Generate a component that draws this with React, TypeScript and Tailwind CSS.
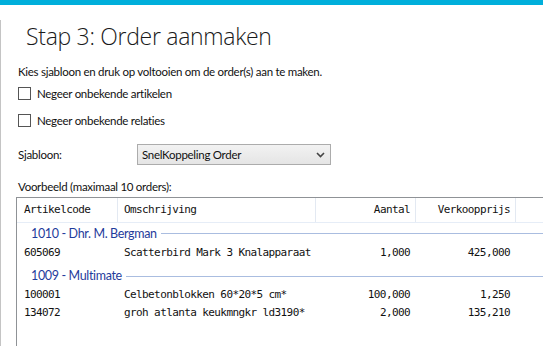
import React from 'react';

type Row = { code: string; desc: string; qty: string; price: string };
type Group = { title: string; rows: Row[] };

const groups: Group[] = [
  {
    title: '1010 - Dhr. M. Bergman',
    rows: [{ code: '605069', desc: 'Scatterbird Mark 3 Knalapparaat', qty: '1,000', price: '425,000' }],
  },
  {
    title: '1009 - Multimate',
    rows: [
      { code: '100001', desc: 'Celbetonblokken 60*20*5 cm*', qty: '100,000', price: '1,250' },
      { code: '134072', desc: 'groh atlanta keukmngkr ld3190*', qty: '2,000', price: '135,210' },
    ],
  },
];

const cols = 'grid grid-cols-[101px_198px_100px_100px_1fr]';
const mono = { fontFamily: '"DejaVu Sans Mono", monospace', letterSpacing: '-0.6px' };

const Checkbox: React.FC<{ label: string }> = ({ label }) => (
  <label className="flex items-center h-[15px] pl-[18px]">
    <span className="w-[13px] h-[13px] border border-[#555] bg-white" />
    <span className="ml-[6px] text-[11.5px] leading-[15px] tracking-[-0.28px]">{label}</span>
  </label>
);

export default function App() {
  return (
    <div
      className="w-[543px] h-[346px] overflow-hidden bg-white text-[#111]"
      style={{ fontFamily: 'Lato, "Liberation Sans", sans-serif' }}
    >
      <div className="h-[5px] bg-[#00afdb]" />
      <div className="h-[341px] border-l border-[#c4c4c4]">
        <h1
          className="mt-[15px] h-[32px] pl-[25px] text-[23px] leading-[32px] font-light tracking-[-0.3px] text-[#1a1a1a]"
          style={{ fontFamily: '"Open Sans", sans-serif' }}
        >
          Stap 3: Order aanmaken
        </h1>

        <p className="mt-[12px] pl-[17px] text-[11.5px] leading-[16px] tracking-[-0.28px]">
          Kies sjabloon en druk op voltooien om de order(s) aan te maken.
        </p>

        <div className="mt-[6px] flex flex-col gap-[12px] -ml-px">
          <Checkbox label="Negeer onbekende artikelen" />
          <Checkbox label="Negeer onbekende relaties" />
        </div>

        <div className="mt-[16px] flex items-center h-[21px] pl-[17px] tracking-[-0.28px]">
          <span className="w-[119px] text-[11.5px]">Sjabloon:</span>
          <div className="w-[194px] h-[21px] border border-[#acacac] bg-gradient-to-b from-[#f2f2f2] to-[#e5e5e5] flex items-center justify-between pl-[4px] pr-[4px]">
            <span className="text-[11.5px]">SnelKoppeling Order</span>
            <svg width="9" height="6" viewBox="0 0 9 6" className="mr-[1px]">
              <polyline points="1,1 4.5,4.5 8,1" fill="none" stroke="#444" strokeWidth="1.6" />
            </svg>
          </div>
        </div>

        <p className="mt-[14px] pl-[17px] text-[11.5px] leading-[16px] tracking-[-0.28px]">
          Voorbeeld (maximaal 10 orders):
        </p>

        <div className="mt-[2px] ml-[15px] w-[560px] h-[200px] border-l border-t border-[#8f9296] bg-white">
          <div className={`${cols} h-[25px] border-b border-[#e6edf7] text-[11px] text-[#111]`} style={mono}>
            <div className="border-r border-[#e3e9f2] flex items-center pl-[7px]">Artikelcode</div>
            <div className="border-r border-[#e3e9f2] flex items-center pl-[6px]">Omschrijving</div>
            <div className="border-r border-[#e3e9f2] flex items-center justify-end pr-[5px]">Aantal</div>
            <div className="border-r border-[#e3e9f2] flex items-center justify-end pr-[5px]">Verkoopprijs</div>
            <div />
          </div>

          {groups.map((g, gi) => (
            <div key={g.title}>
              <div className={`flex items-center pl-[14px] ${gi === 0 ? 'h-[21px]' : 'h-[23px] pt-[3px]'}`}>
                <span className="text-[12.5px] tracking-[-0.35px] text-[#1f3c9c] leading-[20px]">{g.title}</span>
                <span className="flex-1 h-px bg-[#aabde0] ml-[4px]" />
              </div>
              {g.rows.map((r) => (
                <div
                  key={r.code}
                  className={`${cols} ${gi === 0 ? 'h-[19px]' : 'h-[18px]'} items-center text-[11px] text-[#111]`}
                  style={mono}
                >
                  <div className="pl-[7px]">{r.code}</div>
                  <div className="pl-[6px] whitespace-nowrap">{r.desc}</div>
                  <div className="text-right pr-[6px]">{r.qty}</div>
                  <div className="text-right pr-[6px]">{r.price}</div>
                  <div />
                </div>
              ))}
            </div>
          ))}
        </div>
      </div>
    </div>
  );
}
